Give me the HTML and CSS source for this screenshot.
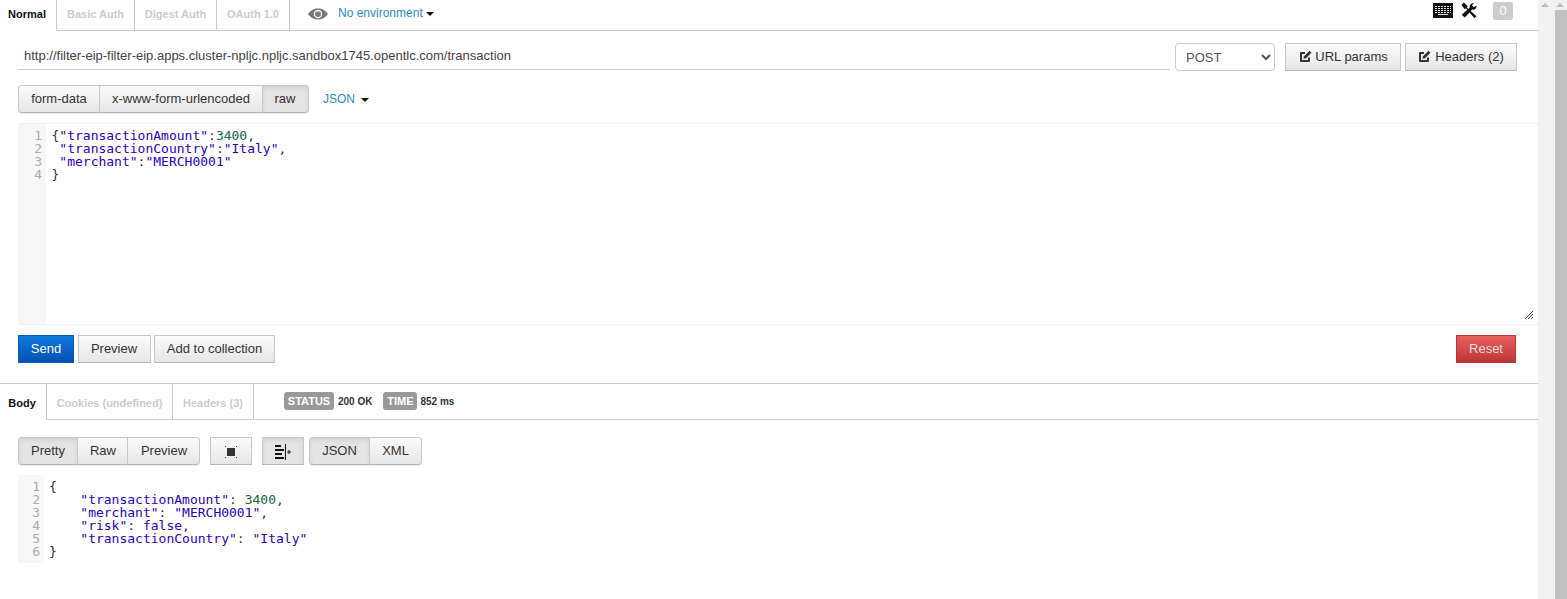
FILE: index.html
```html
<!DOCTYPE html>
<html lang="en">
<head>
<meta charset="utf-8">
<title>Postman</title>
<link rel="stylesheet" href="styles.css">
</head>
<body>
<div class="page">
  <main class="main">
    <nav class="tabs req-tabs">
      <span class="tab active t-normal">Normal</span>
      <span class="tab t-basic">Basic Auth</span>
      <span class="tab t-digest">Digest Auth</span>
      <span class="tab t-oauth">OAuth 1.0</span>
      <svg class="eye" width="20" height="12" viewBox="0 0 20 12"><path fill="#777" fill-rule="evenodd" d="M0 6C3 2 6 .5 10 .5S17 2 20 6c-3 4-6 5.500-10 5.500S3 10 0 6zm10-4.200a4.200 4.200 0 1 0 0 8.400 4.200 4.200 0 0 0 0-8.400z"/><circle cx="10" cy="6" r="3" fill="#777"/><path d="M7.600 4.600a3 3 0 0 1 4.800 0" fill="none" stroke="#ccc"/></svg>
      <span class="env">No environment</span><i class="caret dark env-caret"></i>
      <span class="tools">
        <svg class="kbd" width="20" height="15" viewBox="0 0 20 15"><rect width="20" height="15" fill="#111"/><path fill="none" stroke="#e2e2e2" stroke-dasharray="2 1" d="M2 3.500h16M2 5.500h16M2 7.500h16M2 9.500h16"/><path stroke="#e2e2e2" d="M5 11.500h10"/></svg>
        <svg class="wrench" width="16" height="16" viewBox="0 0 16 16"><path fill="#111" d="M.5 3 3 .5l3.600 3.700-.6 1.500 9.500 8.500-2 2L5 6.500l-1.500.4zM15.500 3.500c.5 2.500-1.800 4.800-4.300 4L3.800 15.500.7 12.700l8-7c-.6-2.600 1.700-5.100 4.300-4.600l-2 2.200 1.800 2z"/></svg>
        <span class="count">0</span>
      </span>
    </nav>

    <section class="url-row">
      <div class="url">http://filter-eip-filter-eip.apps.cluster-npljc.npljc.sandbox1745.opentlc.com/transaction</div>
      <select class="method"><option>POST</option></select>
      <button class="btn url-btn"><svg class="edit" width="13" height="13" viewBox="0 0 13 13"><path fill="none" stroke="#333" stroke-width="2" stroke-linejoin="round" d="M10 7.500V11H2V3h4"/><path fill="#333" d="M5 6.300 10.500.8l2 2L7 8.300l-2.500.4z"/></svg>URL params</button>
      <button class="btn hdr-btn"><svg class="edit" width="13" height="13" viewBox="0 0 13 13"><path fill="none" stroke="#333" stroke-width="2" stroke-linejoin="round" d="M10 7.500V11H2V3h4"/><path fill="#333" d="M5 6.300 10.500.8l2 2L7 8.300l-2.500.4z"/></svg>Headers (2)</button>
    </section>

    <section class="body-row">
      <div class="group">
        <button class="btn g-form">form-data</button>
        <button class="btn g-url">x-www-form-urlencoded</button>
        <button class="btn on g-raw">raw</button>
      </div>
      <span class="json-link">JSON</span><i class="caret dark json-caret"></i>
    </section>

    <section class="editor">
      <div class="gutter g-req">1<br>2<br>3<br>4</div>
      <pre class="code">{<b>"transactionAmount"</b>:<em>3400</em>,
 <b>"transactionCountry"</b>:<b>"Italy"</b>,
 <b>"merchant"</b>:<b>"MERCH0001"</b>
}</pre>
      <svg class="grip" width="8" height="8" viewBox="0 0 8 8"><path stroke="#444" d="M0 8 8 0M3 8l5-5M6 8l2-2"/></svg>
    </section>

    <section class="actions">
      <button class="btn send">Send</button>
      <button class="btn a-prev">Preview</button>
      <button class="btn a-add">Add to collection</button>
      <button class="btn reset">Reset</button>
    </section>

    <nav class="tabs res-tabs">
      <span class="tab active t-body">Body</span>
      <span class="tab t-cookies">Cookies (undefined)</span>
      <span class="tab t-headers">Headers (3)</span>
      <span class="badge b-status">STATUS</span><span class="val">200 OK</span>
      <span class="badge b-time">TIME</span><span class="val val-time">852 ms</span>
    </nav>

    <section class="res-tools">
      <div class="group">
        <button class="btn on r-pretty">Pretty</button>
        <button class="btn r-raw">Raw</button>
        <button class="btn r-prev">Preview</button>
      </div>
      <button class="btn square r-full"><svg width="12" height="12" viewBox="0 0 12 12"><rect x="2" y="2" width="8" height="8" fill="#333"/><path fill="#333" d="M0 0h1v1H0zM11 0h1v1h-1zM0 11h1v1H0zM11 11h1v1h-1z"/></svg></button>
      <button class="btn square on r-wrap"><svg width="16" height="16" viewBox="0 0 16 16"><path fill="#111" d="M0 1h6v2H0zM0 5h9v2H0zM0 9h7v2H0zM0 13h9v2H0zM10 0h1v16h-1zM12 7.500h1.500V6h1v1.500H16v1h-1.500V10h-1V8.500H12z"/></svg></button>
      <div class="group">
        <button class="btn on r-json">JSON</button>
        <button class="btn r-xml">XML</button>
      </div>
    </section>

    <section class="response">
      <div class="gutter g-res">1<br>2<br>3<br>4<br>5<br>6</div>
      <pre class="code">{
    <b>"transactionAmount"</b>: <em>3400</em>,
    <b>"merchant"</b>: <b>"MERCH0001"</b>,
    <b>"risk"</b>: <b>false</b>,
    <b>"transactionCountry"</b>: <b>"Italy"</b>
}</pre>
    </section>
  </main>
  <aside class="bar bar-a"><i class="arrow"></i></aside>
  <aside class="bar bar-b"><i class="arrow"></i><div class="thumb"></div></aside>
</div>
</body>
</html>
```
FILE: styles.css
```css
* { box-sizing: border-box; }
html, body { margin: 0; height: 599px; overflow: hidden; background: #fff; }
body { font-family: "Liberation Sans", Arial, sans-serif; font-size: 13px; color: #333; }
.page { display: flex; height: 599px; }
.main { width: 1538px; flex: none; }

.tabs { display: flex; align-items: stretch; border-bottom: 1px solid #ccc; font-size: 11px; font-weight: 700; color: #ccc; }
.tab { display: flex; align-items: center; justify-content: center; border-right: 1px solid #ccc; }
.tab.active { color: #111; background: #fff; margin-bottom: -1px; padding-right: 2px; }
.req-tabs { height: 31px; }
.req-tabs .tab { padding-bottom: 3px; }
.t-normal { width: 57px; }
.t-basic { width: 78px; }
.t-digest { width: 82px; }
.t-oauth { width: 73px; }
.eye { margin: 8px 0 0 18px; }
.env { font-size: 12px; font-weight: 400; color: #2b8cc4; margin: 6px 0 0 10px; line-height: 14px; }
.caret { display: inline-block; width: 0; height: 0; border-left: 4px solid transparent; border-right: 4px solid transparent; border-top: 4px solid #111; }
.env-caret { margin: 12px 0 0 3px; }
.tools { margin-left: auto; display: flex; align-items: flex-start; }
.kbd { margin: 3px 0 0 0; }
.wrench { margin: 2px 0 0 8px; }
.count { width: 20px; height: 18px; margin: 2px 25px 0 16px; background: #ccc; color: #fff; font-size: 13px; font-weight: 400; text-align: center; line-height: 18px; border-radius: 2px; }

.url-row { display: flex; align-items: flex-start; padding: 12px 0 0 18px; height: 54px; }
.url { width: 1152px; height: 27px; border-bottom: 1px solid #ccc; padding: 5px 0 0 6px; font-size: 13px; line-height: 15px; color: #444; }
.method { width: 100px; height: 28px; margin-left: 5px; padding-left: 6px; border: 1px solid #ccc; border-radius: 4px; background: #fff; color: #555; font: 13px "Liberation Sans", Arial, sans-serif; }
.btn { height: 28px; padding: 0 0 2px; border: 1px solid #c8c8c8; border-bottom-color: #b5b5b5; background: linear-gradient(#fbfbfb, #e6e6e6); color: #333; font: 13px/1 "Liberation Sans", Arial, sans-serif; cursor: pointer; }
.url-btn { width: 116px; margin-left: 10px; padding-left: 1px; }
.url-btn .edit { margin-right: 3px; }
.hdr-btn { width: 112px; margin-left: 4px; }
.edit { vertical-align: -2px; margin-right: 4px; }

.body-row { display: flex; align-items: flex-start; height: 38px; padding-left: 18px; }
.group { display: flex; border-radius: 4px; box-shadow: 0 1px 1px rgba(0,0,0,.08); }
.group .btn { margin-left: -1px; }
.group .btn:first-child { margin-left: 0; border-radius: 4px 0 0 4px; }
.group .btn:last-child { border-radius: 0 4px 4px 0; }
.btn.on { background: #e4e4e4; box-shadow: inset 0 2px 4px rgba(0,0,0,.08); }
.g-form { width: 82px; }
.g-url { width: 164px; }
.g-raw { width: 47px; padding-right: 1px; }
.json-link { margin-left: 14px; font-size: 12px; line-height: 28px; color: #2b8cc4; }
.json-caret { margin: 13px 0 0 6px; }

.editor { position: relative; display: flex; height: 202px; border-top: 1px solid #eee; border-bottom: 1px solid #eee; margin-left: 18px; }
.gutter { flex: none; background: #f7f7f7; color: #aaa; font: 13px/13px "DejaVu Sans Mono", monospace; text-align: right; }
.g-req { width: 28px; padding: 5px 4px 0 0; }
.code { margin: 0; font: 13px/13px "DejaVu Sans Mono", monospace; color: #333; }
.editor .code { padding: 5px 0 0 5.500px; }
.code b { font-weight: 400; color: #2a00c8; }
.code em { font-style: normal; color: #116644; }
.grip { position: absolute; right: 5px; bottom: 5px; }

.actions { display: flex; height: 58px; padding: 10px 22px 0 18px; align-items: flex-start; }
.send { width: 56px; background: linear-gradient(#0d7bdc, #0450b4); border-color: #0a5ab8; color: #fff; }
.a-prev { width: 73px; margin-left: 4px; padding-right: 1px; }
.a-add { width: 121px; margin-left: 3px; }
.reset { width: 60px; margin-left: auto; background: linear-gradient(#e8605e, #bd3534); border-color: #b33; color: #f5dddd; }

.res-tabs { height: 37px; border-top: 1px solid #ccc; }
.res-tabs .tab { padding-top: 3px; }
.res-tabs .tab.active { padding-top: 1px; }
.t-body { width: 47px; }
.t-cookies { width: 126px; }
.t-headers { width: 81px; }
.badge { align-self: flex-start; height: 18px; margin-top: 8px; background: #999; color: #fff; border-radius: 3px; font-size: 11px; line-height: 19px; text-align: center; }
.b-status { width: 50px; margin-left: 30px; }
.b-time { width: 34px; margin-left: 11px; }
.val { align-self: flex-start; margin: 9px 0 0 4px; color: #333; font-size: 10px; line-height: 18px; }
.val-time { margin-left: 3px; }

.res-tools { display: flex; align-items: flex-start; height: 55px; padding: 17px 0 0 18px; }
.r-pretty { width: 60px; }
.r-raw { width: 51px; padding-left: 1px; }
.r-prev { width: 73px; padding-left: 1px; }
.square { width: 42px; padding: 2px 0 0; }
.square svg { display: block; margin: auto; }
.r-full { margin-left: 10px; }
.r-wrap { margin: 0 5px 0 10px; }
.r-json { width: 61px; }
.r-xml { width: 53px; }

.response { display: flex; margin-left: 18px; height: 88px; }
.g-res { width: 26px; padding: 5px 4px 0 0; }
.response .code { padding: 5px 0 0 5px; }

.bar { position: relative; flex: none; background: #f1f1f1; height: 599px; }
.bar-a { width: 15px; }
.bar-b { width: 14px; }
.arrow { position: absolute; top: 3px; left: 3px; width: 0; height: 0; border-left: 4px solid transparent; border-right: 4px solid transparent; border-bottom: 4px solid #bbb; }
.thumb { position: absolute; top: 10px; bottom: 0; right: 0; left: 2px; background: #c1c1c1; }
```
